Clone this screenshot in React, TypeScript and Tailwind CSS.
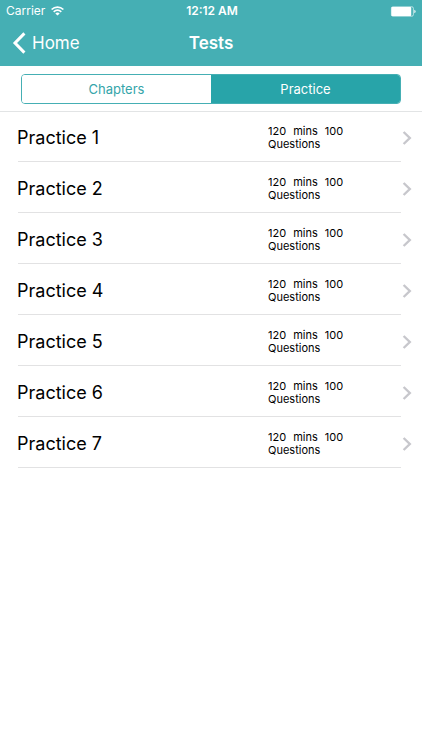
import React, { useState } from "react";

const tests = [1, 2, 3, 4, 5, 6, 7].map((n) => ({
  name: `Practice ${n}`,
  minutes: 120,
  questions: 100,
}));

function StatusBar() {
  return (
    <div className="grid h-[22px] grid-cols-[1fr_auto_1fr] items-center pr-1.5 pl-1.5 text-xs">
      <div className="flex items-center gap-1.5">
        <span>Carrier</span>
        <svg width="13" height="10" viewBox="0 0 13 10" fill="none" stroke="currentColor" strokeWidth="1.7" aria-label="Wi-Fi">
          <path d="M0.6 3.5C4 0.2 9 0.2 12.4 3.5" />
          <path d="M2.7 5.8C5 3.7 8 3.7 10.3 5.8" />
          <path d="M4.3 7.4C5.7 6.2 7.3 6.2 8.7 7.4L6.5 9.6Z" fill="currentColor" stroke="none" />
        </svg>
      </div>
      <span className="pl-0.5 text-center font-semibold">12:12 AM</span>
      <svg className="justify-self-end" width="26" height="11" viewBox="0 0 26 11" aria-label="Battery">
        <rect x="1.4" y="0.8" width="22" height="9.4" rx="1.5" fill="none" stroke="#fff" strokeOpacity="0.75" strokeWidth="0.8" />
        <rect x="1.4" y="1" width="19.8" height="9" rx="0.8" fill="#fff" />
        <path d="M24.4 3.8C26 4.3 26 6.7 24.4 7.2Z" fill="#fff" />
      </svg>
    </div>
  );
}

function NavBar() {
  return (
    <nav className="grid h-11 grid-cols-[1fr_auto_1fr] items-center px-3 pb-0.5">
      <button type="button" className="flex items-center gap-1.5 justify-self-start text-[17px] leading-6">
        <svg width="14" height="22" viewBox="0 0 14 22" fill="none" stroke="currentColor" strokeWidth="3" aria-hidden="true">
          <path d="M12.4 1.4L3 11L12.4 20.6" />
        </svg>
        Home
      </button>
      <h1 className="text-[17px] leading-6 font-semibold">Tests</h1>
    </nav>
  );
}

export default function App() {
  const [tab, setTab] = useState("Practice");
  return (
    <div className="min-h-screen bg-white font-['Inter','Liberation_Sans',sans-serif] text-black">
      <header className="bg-[#45afb4] text-white">
        <StatusBar />
        <NavBar />
      </header>
      <div className="border-b border-[#e2e4e5] px-[21px] pt-2 pb-[7px]">
        <div className="grid h-[30px] grid-cols-2 overflow-hidden rounded border border-[#45afb4]">
          {["Chapters", "Practice"].map((label) => (
            <button
              key={label}
              type="button"
              aria-pressed={tab === label}
              onClick={() => setTab(label)}
              className={
                tab === label
                  ? "bg-[#28a4a9] text-[13px] leading-5 text-white"
                  : "bg-white text-[13px] leading-5 text-[#35a5aa]"
              }
            >
              {label}
            </button>
          ))}
        </div>
      </div>
      <ul>
        {tests.map((test, i) => (
          <li key={test.name} className={i === 0 ? "h-[50px]" : "h-[51px]"}>
            <button
              type="button"
              className="flex h-full w-full items-center pt-0.5 pr-2.5 pl-[17px] text-left"
            >
              <span className="flex-1 text-lg">{test.name}</span>
              <span className="w-[134px] text-[11px] leading-[13px]">
                <span className="flex gap-[7px]">
                  <span>{test.minutes}</span>
                  <span>mins</span>
                  <span>{test.questions}</span>
                </span>
                <span className="block">Questions</span>
              </span>
              <svg width="10" height="14" viewBox="0 0 10 14" fill="none" stroke="#c7c7cc" strokeWidth="2.4" aria-hidden="true">
                <path d="M1.6 1L7.8 7L1.6 13" />
              </svg>
            </button>
            <div className="-mt-px mr-[21px] ml-[18px] h-px bg-[#e2e2e3]" />
          </li>
        ))}
      </ul>
    </div>
  );
}
